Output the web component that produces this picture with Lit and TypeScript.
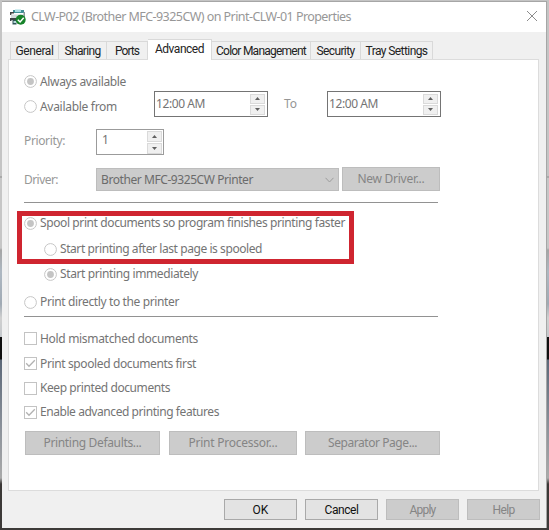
import { LitElement, html, css, svg } from "lit";
import { customElement, property } from "lit/decorators.js";
import { classMap } from "lit/directives/class-map.js";

/* A single line of text whose letter spacing is tuned to fill a given width. */
@customElement("fit-text")
class FitText extends LitElement {
  @property({ type: Number }) w = 0;
  @property() text = "";
  static styles = css`
    :host { display: inline-block; white-space: nowrap; flex: none; }
    span { display: inline-block; }
  `;
  render() {
    return html`<span>${this.text}</span>`;
  }
  firstUpdated() {
    const span = this.renderRoot.querySelector("span") as HTMLElement;
    const gap = (this.w - span.getBoundingClientRect().width) / this.text.length;
    span.style.letterSpacing = `${gap.toFixed(3)}px`;
  }
}

@customElement("app-root")
class AppRoot extends LitElement {
  static styles = css`
    * { box-sizing: border-box; }
    :host {
      display: block; box-sizing: border-box; position: relative; width: 549px; height: 530px; overflow: hidden;
      padding: 1px 2px 2px 2px;
      font: 12px/16px "Noto Sans", "Open Sans", sans-serif; color: #747474;
      background: linear-gradient(#c4c4c4 0 176px, #8e8e8e 177px, #c6c6c6 178px 248px, #a5a5a5 250px, #aeb8c2 272px, #a0aab4 304px, #d0d0d0 318px, #c4c8cc 337px, #101010 337px 359px, #5c6878 360px, #8d939b 430px, #aaa 478px, #3b3836 484px, #3d3b39);
    }
    .window { display: flex; flex-direction: column; height: 527px; background: #f0f0f0; border: 1px solid #a6a6a6; border-width: 1px 1px 0 0; }
    .title { display: flex; align-items: center; height: 30px; background: #fff; padding: 0 8px 0 8px; color: #979797; }
    .title svg { flex: none; }
    .title fit-text { margin-left: 5px; font-size: 12.5px; }
    .close { margin-left: auto; margin-top: -2px; }
    .tabs { display: flex; align-items: flex-end; height: 27px; padding-left: 8px; font-family: Roboto, "Liberation Sans", sans-serif; color: #222; }
    .tab { display: flex; justify-content: center; align-items: center; height: 18px; border: 1px solid #d9d9d9; border-width: 1px 1px 0 0; font-size: 12px; }
    .tab:first-child { border-left-width: 1px; }
    .tab.on { height: 21px; background: #fff; z-index: 1; margin-bottom: -1px; padding-bottom: 3px; }
    .panel { height: 432px; width: 531px; margin-left: 6px; flex: none; background: #fff; border: 1px solid #dcdcdc; padding: 12px 0 0 15px; }
    .row { display: flex; align-items: center; height: 20px; }
    .opt { display: flex; align-items: center; gap: 3px; }
    .sub { padding-left: 20px; }
    .first { height: 19px; }
    .times { height: 26px; }
    .times .opt { padding-top: 5px; width: 130px; }
    .field { display: flex; align-items: center; height: 26px; border: 1px solid #747474; padding: 0 2px 0 1px; justify-content: space-between; }
    .time { width: 114px; }
    .to { width: 59px; padding-left: 16px; color: #959595; }
    .prio { height: 26px; margin-top: 12px; }
    .prio .field { width: 68px; border-color: #9b9b9b; padding: 0 1px 0 5px; }
    .prio .field fit-text { margin-top: -4px; }
    .label { width: 72px; color: #989898; margin-top: -3px; }
    .spin { display: flex; flex-direction: column; gap: 1px; }
    .spin i { display: flex; align-items: center; justify-content: center; width: 15px; height: 10px; background: #f0f0f0; border: 1px solid #dadada; }
    .prio .spin i { height: 11px; }
    .driver { height: 24px; margin-top: 12px; }
    .driver .label { margin-top: 2px; }
    .combo { display: flex; align-items: center; justify-content: space-between; width: 243px; height: 23px; margin: 1px 3px 0 0; padding: 0 4px; background: #ccc; border: 1px solid #bdbdbd; color: #6b6b6b; }
    .btn { display: flex; align-items: center; justify-content: center; height: 24px; background: #ccc; border: 1px solid #bdbdbd; color: #858585; }
    .w98 { width: 98px; }
    .w135 { width: 135px; }
    .w128 { width: 128px; }
    .line { width: 414px; height: 1px; background: #929292; margin-top: 11px; }
    .spool { margin-top: 10px; }
    .after { margin-top: 6px; }
    .now { margin-top: 5px; }
    .direct { margin-top: 8px; }
    .direct + .line { margin-top: 4px; }
    .hold { margin-top: 12px; height: 19px; }
    .spooled { margin-top: 6px; height: 19px; }
    .keep { margin-top: 5px; }
    .enable { margin-top: 4px; }
    .actions { display: flex; gap: 8px; margin: 9px 0 0 1px; }
    .actions .btn:first-child { margin-right: 1px; }
    .footer { display: flex; gap: 8px; justify-content: flex-end; padding: 8px 6px 0 0; font-family: Roboto, "Liberation Sans", sans-serif; }
    .footer .btn { width: 73px; height: 21px; }
    .footer .live { background: #e3e3e3; border-color: #a9a9a9; color: #111; }
    .mark { position: absolute; left: 17px; top: 211px; width: 337px; height: 53px; border: 5px solid #cf2530; }
    svg { display: block; }
  `;

  radio(on: boolean) {
    return html`<svg width="13" height="13" viewBox="0 0 13 13"><circle cx="6.5" cy="6.5" r="5.9" fill="#fff" stroke="#c6c6c6"/>${on ? svg`<circle cx="6.5" cy="6.5" r="3.4" fill="#c4c4c4"/>` : ""}</svg>`;
  }
  check(on: boolean) {
    return html`<svg width="13" height="13" viewBox="0 0 13 13"><rect x=".5" y=".5" width="12" height="12" fill="#fff" stroke="#c3c3c3"/>${on ? svg`<path d="M2.2 6.3 5 9.2 10.8 3.2" fill="none" stroke="#b2b2b2" stroke-width="1.3"/>` : ""}</svg>`;
  }
  spin() {
    return html`<span class="spin">
      <i><svg width="5" height="3" viewBox="0 0 5 3"><path d="M0 3 2.5 0 5 3Z" fill="#606060"/></svg></i>
      <i><svg width="5" height="3" viewBox="0 0 5 3"><path d="M0 0 2.5 3 5 0Z" fill="#606060"/></svg></i>
    </span>`;
  }
  t(text: string, w: number) {
    return html`<fit-text .text=${text} .w=${w}></fit-text>`;
  }
  option(cls: string, box: unknown, text: string, w: number) {
    return html`<div class="row ${cls}"><span class="opt">${box}${this.t(text, w)}</span></div>`;
  }

  render() {
    const tabs: [string, number, number][] = [
      ["General", 49, 38], ["Sharing", 48, 36], ["Ports", 41, 24], ["Advanced", 64, 49],
      ["Color Management", 99, 90], ["Security", 50, 38], ["Tray Settings", 72, 62],
    ];
    return html`
      <div class="window">
        <div class="title">
          <svg width="16" height="17" viewBox="0 0 16 17">
            <path d="M3 1h11v3H3z" fill="#3f8f96"/><path d="M5 .5h6v2.5H5z" fill="#a9dde2"/>
            <path d="M0 3h4v1.600H1.500V6H0z" fill="#444"/>
            <path d="M1 5.500h13.500v4H1z" fill="#d3dadb"/><path d="M13.500 3h1.500v5h-1.500z" fill="#8a999b"/>
            <path d="M0 9h6v2H1.500v1H0z" fill="#3d4446"/>
            <path d="M2.500 11h4v4.500h-4z" fill="#2f5558"/><path d="M3.500 12h3v2h-3z" fill="#b9d9dc"/>
            <circle cx="10.700" cy="10.800" r="5" fill="#168329"/>
            <path d="M7.800 10.800 10.100 13 13.700 8.800" fill="none" stroke="#fff" stroke-width="1.500"/>
          </svg>
          ${this.t("CLW-P02 (Brother MFC-9325CW) on Print-CLW-01 Properties", 320)}
          <svg class="close" width="12" height="12" viewBox="0 0 12 12"><path d="M1 1 11 11M11 1 1 11" stroke="#8c8c8c" fill="none"/></svg>
        </div>
        <div class="tabs">
          ${tabs.map(([name, width, w]) => html`<div class=${classMap({ tab: true, on: name === "Advanced" })} style="width:${width}px">${this.t(name, w)}</div>`)}
        </div>
        <div class="panel">
          ${this.option("first", this.radio(true), "Always available", 86)}
          <div class="row times">
            <span class="opt">${this.radio(false)}${this.t("Available from", 77)}</span>
            <div class="field time">${this.t("12:00 AM", 49)}${this.spin()}</div>
            <span class="to">${this.t("To", 13)}</span>
            <div class="field time">${this.t("12:00 AM", 49)}${this.spin()}</div>
          </div>
          <div class="row prio">
            <span class="label">${this.t("Priority:", 41)}</span>
            <div class="field">${this.t("1", 6)}${this.spin()}</div>
          </div>
          <div class="row driver">
            <span class="label">${this.t("Driver:", 34)}</span>
            <div class="combo">${this.t("Brother MFC-9325CW Printer", 152)}
              <svg width="9" height="6" viewBox="0 0 9 6"><path d="M.5.8 4.5 5 8.5.8" fill="none" stroke="#9c9c9c"/></svg>
            </div>
            <div class="btn w98">${this.t("New Driver...", 67)}</div>
          </div>
          <div class="line"></div>
          ${this.option("spool", this.radio(true), "Spool print documents so program finishes printing faster", 305)}
          ${this.option("sub after", this.radio(false), "Start printing after last page is spooled", 202)}
          ${this.option("sub now", this.radio(true), "Start printing immediately", 138)}
          ${this.option("direct", this.radio(false), "Print directly to the printer", 139)}
          <div class="line"></div>
          ${this.option("hold", this.check(false), "Hold mismatched documents", 158)}
          ${this.option("spooled", this.check(true), "Print spooled documents first", 156)}
          ${this.option("keep", this.check(false), "Keep printed documents", 130)}
          ${this.option("enable", this.check(true), "Enable advanced printing features", 179)}
          <div class="actions">
            <div class="btn w135">${this.t("Printing Defaults...", 98)}</div>
            <div class="btn w128">${this.t("Print Processor...", 89)}</div>
            <div class="btn w135">${this.t("Separator Page...", 89)}</div>
          </div>
        </div>
        <div class="footer">
          <div class="btn live">${this.t("OK", 16)}</div>
          <div class="btn live">${this.t("Cancel", 34)}</div>
          <div class="btn">${this.t("Apply", 26)}</div>
          <div class="btn">${this.t("Help", 22)}</div>
        </div>
      </div>
      <div class="mark"></div>`;
  }
}
